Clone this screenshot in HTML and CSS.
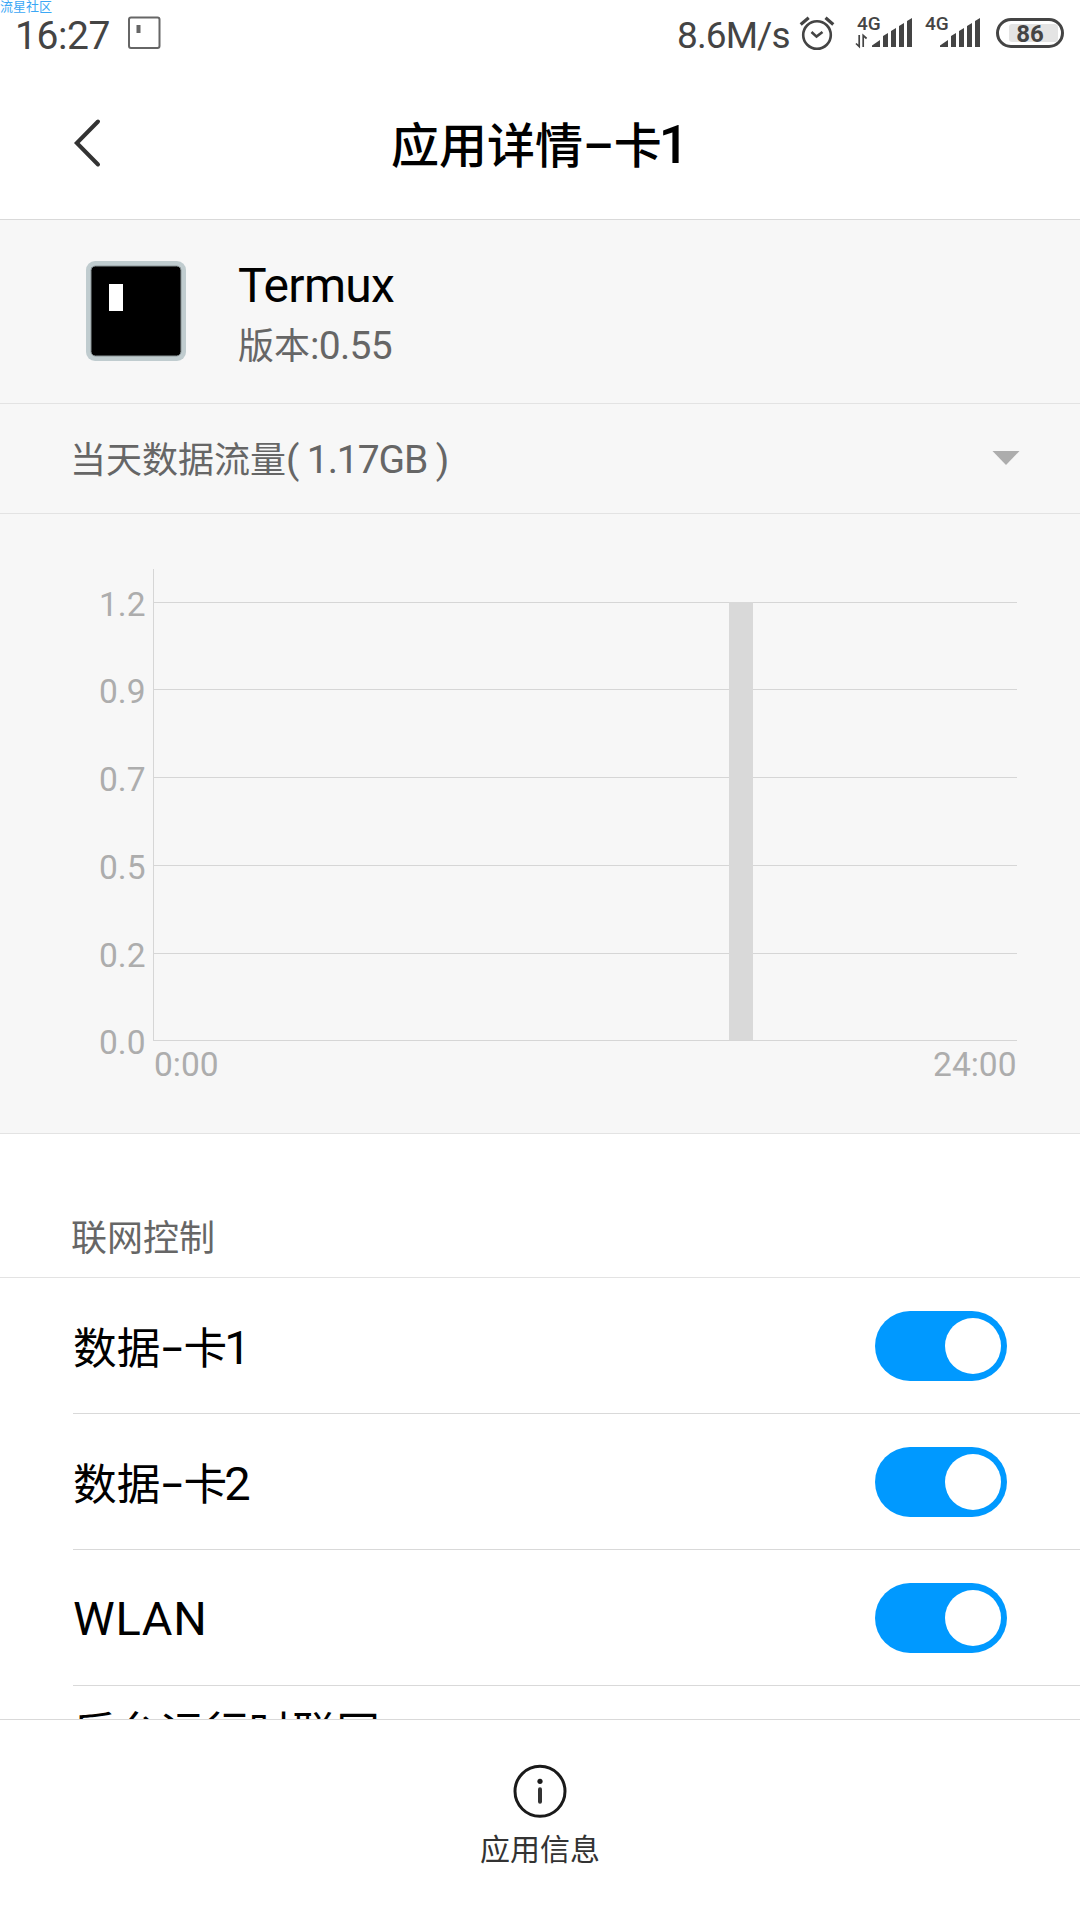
FILE: index.html
```html
<!DOCTYPE html>
<html lang="zh-CN">
  <head>
    <meta charset="UTF-8" />
    <meta name="viewport" content="width=device-width, initial-scale=1.0" />
    <title>应用详情</title>
    <link rel="stylesheet" href="styles.css">
  </head>
  <body>
    <span class="watermark">流星社区</span>

    <div class="status-bar">
      <span class="time">16:27</span>
      <svg class="notification" width="34" height="34" viewBox="0 0 34 34">
        <rect x="2" y="2.5" width="30.5" height="30.5" rx="2" fill="none" stroke="#666" stroke-width="2" />
        <rect x="9.5" y="10" width="4" height="8" fill="#666" />
      </svg>
      <span class="speed">8.6M/s</span>
      <svg class="alarm" width="36" height="36" viewBox="0 0 36 36" fill="none" stroke="#444" stroke-width="2.6">
        <circle cx="18" cy="20" r="13.8" />
        <path d="M12.5 17l5 4.6 6-4.6" />
        <path d="M1.7 9.5L9.7 2.7M26.5 2.7l7.8 6.8" stroke-width="3.2" />
      </svg>
      <svg class="signal" width="58" height="36" viewBox="0 0 58 36" fill="#444">
        <text x="2" y="15">4G</text>
        <path d="M4.2 20v11.5L1 28.5M8.2 32V20.5l3.4 3" fill="none" stroke="#444" stroke-width="1.7" />
        <path d="M17 32v-1.5l8-5.5v7zM28 32V21l5-3v14zM36 32V16l5-3v19zM44 32V11l5-3v24zM52 32V6l5-3v29z" />
      </svg>
      <svg class="signal" width="58" height="36" viewBox="0 0 58 36" fill="#444">
        <text x="2" y="15">4G</text>
        <path d="M17 32v-1.5l8-5.5v7zM28 32V21l5-3v14zM36 32V16l5-3v19zM44 32V11l5-3v24zM52 32V6l5-3v29z" />
      </svg>
      <div class="battery"><span>86</span></div>
    </div>

    <header class="title-bar">
      <svg class="back" width="30" height="50" viewBox="0 0 30 50">
        <path d="M26 3.5L4.8 25 26 46.5" fill="none" stroke="#333" stroke-width="4" stroke-linecap="round" />
      </svg>
      <h1>应用详情–卡<span class="latin">1</span></h1>
    </header>

    <main>
      <section class="app">
        <svg width="100" height="100" viewBox="0 0 100 100">
          <rect width="100" height="100" rx="9" fill="#c0cccf" />
          <rect x="5" y="5" width="90" height="90" rx="4.5" fill="#000" stroke="#8a9496" stroke-width="1" />
          <rect x="23" y="23" width="14" height="27" fill="#fff" />
        </svg>
        <div>
          <h2>Termux</h2>
          <p>版本<span class="latin">:0.55</span></p>
        </div>
      </section>

      <section class="usage">
        <p>当天数据流量<span class="latin">( 1.17GB )</span></p>
        <svg width="28" height="16" viewBox="0 0 28 16">
          <path d="M0.5 0h27L14 14z" fill="#adadad" />
        </svg>
      </section>

      <section class="chart">
        <svg width="1080" height="619" viewBox="0 0 1080 619">
          <path class="axis" d="M153.5 55v472" />
          <path class="axis" d="M153 88.5h864M153 175.5h864M153 263.5h864M153 351.5h864M153 439.5h864M153 526.5h864" />
          <rect x="729" y="88" width="24" height="438" fill="#d9d9d9" />
          <g text-anchor="end">
            <text x="145.5" y="102">1.2</text>
            <text x="145.5" y="189">0.9</text>
            <text x="145.5" y="277">0.7</text>
            <text x="145.5" y="365">0.5</text>
            <text x="145.5" y="453">0.2</text>
            <text x="145.5" y="540">0.0</text>
            <text x="1016.5" y="562">24:00</text>
          </g>
          <text x="154" y="562">0:00</text>
        </svg>
      </section>

      <h3>联网控制</h3>
      <ul class="network">
        <li><span class="name">数据<span class="dash">–</span>卡<span class="latin digit">1</span></span><i class="switch"></i></li>
        <li><span class="name">数据<span class="dash">–</span>卡<span class="latin digit">2</span></span><i class="switch"></i></li>
        <li><span class="name latin">WLAN</span><i class="switch"></i></li>
        <li class="background">后台运行时联网</li>
      </ul>
    </main>

    <footer>
      <svg width="55" height="54" viewBox="0 0 55 54">
        <circle cx="27" cy="27.3" r="25" fill="none" stroke="#1a1a1a" stroke-width="3" />
        <circle cx="27" cy="17.3" r="2.6" fill="#1a1a1a" />
        <path d="M27 25.3v12.5" stroke="#333" stroke-width="4" stroke-linecap="round" />
      </svg>
      <span>应用信息</span>
    </footer>
  </body>
</html>
```
FILE: styles.css
```css
* {
  box-sizing: border-box;
}
body {
  margin: 0;
  height: 1920px;
  display: flex;
  overflow: hidden;
  color: #000;
  flex-direction: column;
  background-color: #fff;
  font-family: Roboto, "Noto Sans CJK SC", sans-serif;
}
h1,
h2,
h3,
p,
ul {
  margin: 0;
  padding: 0;
  font-weight: 400;
}
svg {
  display: block;
  flex-shrink: 0;
}

.watermark {
  top: 0;
  left: 0;
  position: absolute;
  color: #3ba7f5;
  font-size: 13px;
  line-height: 13px;
}

/* status bar */
.status-bar {
  height: 66px;
  display: flex;
  flex-shrink: 0;
  color: #444;
  padding: 15px 16px 0 15px;
}
.time {
  width: 112px;
  font-size: 39px;
  line-height: 42px;
  letter-spacing: -0.4px;
}
.speed {
  width: 122px;
  font-size: 37px;
  margin-left: auto;
  line-height: 41px;
  letter-spacing: -0.9px;
}
.alarm {
  margin-right: 20px;
}
.signal {
  overflow: visible;
  margin-right: 10px;
}
.signal + .battery {
  margin-left: 5px;
}
.signal text {
  font-size: 19px;
  font-weight: 500;
}
.battery {
  width: 68px;
  height: 30px;
  padding: 3px;
  margin-top: 3px;
  font-size: 24px;
  font-weight: 700;
  line-height: 20px;
  text-align: center;
  border-radius: 15px;
  border: 3px solid #444;
}
.battery span {
  width: 49px;
  height: 18px;
  display: block;
  border-radius: 3px;
  margin-left: 7px;
  padding-right: 7px;
  background-color: #e4e4e4;
}

/* title bar */
.title-bar {
  height: 154px;
  display: flex;
  flex-shrink: 0;
  padding: 0 72px 0 72px;
  border-bottom: 1px solid #d9d9d9;
}
.back {
  margin-top: 52px;
}
.title-bar h1 {
  flex: 1;
  font-size: 48px;
  font-weight: 500;
  line-height: 72px;
  margin-top: 43px;
  text-align: center;
  padding-right: 30px;
}
.title-bar h1 .latin {
  font-size: 53px;
  margin-left: -3px;
}

main {
  height: 1499px;
  overflow: hidden;
}

/* app info */
.app {
  height: 184px;
  display: flex;
  gap: 52px;
  padding: 41px 86px 0;
  background-color: #f7f7f7;
  border-bottom: 1px solid #e3e3e3;
}
.app h2 {
  font-size: 48px;
  line-height: 50px;
  letter-spacing: -0.7px;
}
.app p,
.usage p {
  color: #666;
  font-size: 36px;
  line-height: 60px;
}
.app p {
  margin-top: 5px;
}
.app .latin,
.usage .latin {
  font-size: 39px;
  letter-spacing: -0.7px;
}
.usage {
  height: 110px;
  display: flex;
  align-items: center;
  padding: 0 60px 0 70px;
  justify-content: space-between;
  background-color: #f7f7f7;
  border-bottom: 1px solid #e3e3e3;
}
.usage p {
  padding-top: 4px;
}
.usage .latin {
  letter-spacing: -1.1px;
}

/* traffic by hour */
.chart {
  height: 620px;
  background-color: #f7f7f7;
  border-bottom: 1px solid #e3e3e3;
}
.chart .axis {
  fill: none;
  stroke: #d6d6d6;
}
.chart text {
  fill: #adadad;
  font-size: 33.5px;
}

/* network control */
h3 {
  color: #666;
  height: 144px;
  font-size: 36px;
  line-height: 50px;
  padding: 80px 71px 0;
  border-bottom: 1px solid #e3e3e3;
}
.network {
  list-style: none;
  font-size: 43.7px;
}
.network li {
  height: 136px;
  display: flex;
  line-height: 64px;
  margin-left: 73px;
  align-items: center;
  padding-right: 73px;
  justify-content: space-between;
  border-bottom: 1px solid #d9d9d9;
}
.network .name {
  padding-top: 5px;
}
.network .dash {
  font-size: 36px;
  font-weight: 500;
  vertical-align: 2px;
  line-height: 1;
}
.network .latin {
  font-size: 47px;
  letter-spacing: 0.7px;
}
.network .name.latin {
  padding-top: 3px;
}
.network .digit {
  margin-left: -3px;
}
.network .background {
  padding-top: 15px;
  align-items: flex-start;
  letter-spacing: 0.2px;
}
.switch {
  width: 132px;
  height: 70px;
  display: flex;
  padding: 7px 6px;
  border-radius: 35px;
  justify-content: flex-end;
  background-color: #0099ff;
}
.switch::before {
  content: "";
  width: 56px;
  height: 56px;
  border-radius: 50%;
  background-color: #fff;
}

footer {
  flex: 1;
  display: flex;
  color: #333;
  font-size: 30px;
  line-height: 40px;
  padding-top: 44px;
  align-items: center;
  flex-direction: column;
  background-color: #fff;
  border-top: 1px solid #d9d9d9;
}
footer span {
  margin-top: 12px;
}
```
